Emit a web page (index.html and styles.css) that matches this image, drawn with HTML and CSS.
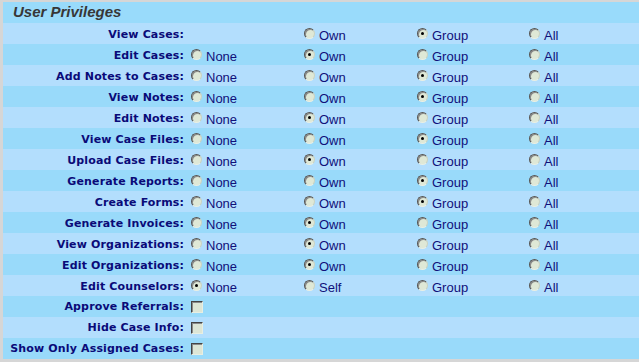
FILE: index.html
```html
<!DOCTYPE html>
<html lang="en">
<head>
  <meta charset="UTF-8" />
  <title>User Privileges</title>
  <link rel="stylesheet" href="styles.css">
</head>
<body>
  <div class="panel">
    <div class="panel-title">User Privileges</div>

    <div class="row light">
      <div class="label">View Cases:</div>
      <div class="opt"></div>
      <div class="opt"><span class="radio"></span>Own</div>
      <div class="opt"><span class="radio on"></span>Group</div>
      <div class="opt"><span class="radio"></span>All</div>
    </div>
    <div class="row dark">
      <div class="label">Edit Cases:</div>
      <div class="opt"><span class="radio"></span>None</div>
      <div class="opt"><span class="radio on"></span>Own</div>
      <div class="opt"><span class="radio"></span>Group</div>
      <div class="opt"><span class="radio"></span>All</div>
    </div>
    <div class="row light">
      <div class="label">Add Notes to Cases:</div>
      <div class="opt"><span class="radio"></span>None</div>
      <div class="opt"><span class="radio"></span>Own</div>
      <div class="opt"><span class="radio on"></span>Group</div>
      <div class="opt"><span class="radio"></span>All</div>
    </div>
    <div class="row dark">
      <div class="label">View Notes:</div>
      <div class="opt"><span class="radio"></span>None</div>
      <div class="opt"><span class="radio"></span>Own</div>
      <div class="opt"><span class="radio on"></span>Group</div>
      <div class="opt"><span class="radio"></span>All</div>
    </div>
    <div class="row light">
      <div class="label">Edit Notes:</div>
      <div class="opt"><span class="radio"></span>None</div>
      <div class="opt"><span class="radio on"></span>Own</div>
      <div class="opt"><span class="radio"></span>Group</div>
      <div class="opt"><span class="radio"></span>All</div>
    </div>
    <div class="row dark">
      <div class="label">View Case Files:</div>
      <div class="opt"><span class="radio"></span>None</div>
      <div class="opt"><span class="radio"></span>Own</div>
      <div class="opt"><span class="radio on"></span>Group</div>
      <div class="opt"><span class="radio"></span>All</div>
    </div>
    <div class="row light">
      <div class="label">Upload Case Files:</div>
      <div class="opt"><span class="radio"></span>None</div>
      <div class="opt"><span class="radio on"></span>Own</div>
      <div class="opt"><span class="radio"></span>Group</div>
      <div class="opt"><span class="radio"></span>All</div>
    </div>
    <div class="row dark">
      <div class="label">Generate Reports:</div>
      <div class="opt"><span class="radio"></span>None</div>
      <div class="opt"><span class="radio"></span>Own</div>
      <div class="opt"><span class="radio on"></span>Group</div>
      <div class="opt"><span class="radio"></span>All</div>
    </div>
    <div class="row light">
      <div class="label">Create Forms:</div>
      <div class="opt"><span class="radio"></span>None</div>
      <div class="opt"><span class="radio"></span>Own</div>
      <div class="opt"><span class="radio on"></span>Group</div>
      <div class="opt"><span class="radio"></span>All</div>
    </div>
    <div class="row dark">
      <div class="label">Generate Invoices:</div>
      <div class="opt"><span class="radio"></span>None</div>
      <div class="opt"><span class="radio on"></span>Own</div>
      <div class="opt"><span class="radio"></span>Group</div>
      <div class="opt"><span class="radio"></span>All</div>
    </div>
    <div class="row light">
      <div class="label">View Organizations:</div>
      <div class="opt"><span class="radio"></span>None</div>
      <div class="opt"><span class="radio on"></span>Own</div>
      <div class="opt"><span class="radio"></span>Group</div>
      <div class="opt"><span class="radio"></span>All</div>
    </div>
    <div class="row dark">
      <div class="label">Edit Organizations:</div>
      <div class="opt"><span class="radio"></span>None</div>
      <div class="opt"><span class="radio on"></span>Own</div>
      <div class="opt"><span class="radio"></span>Group</div>
      <div class="opt"><span class="radio"></span>All</div>
    </div>
    <div class="row light">
      <div class="label">Edit Counselors:</div>
      <div class="opt"><span class="radio on"></span>None</div>
      <div class="opt"><span class="radio"></span>Self</div>
      <div class="opt"><span class="radio"></span>Group</div>
      <div class="opt"><span class="radio"></span>All</div>
    </div>
    <div class="row dark">
      <div class="label">Approve Referrals:</div>
      <div class="opt"><span class="check"></span></div>
    </div>
    <div class="row light">
      <div class="label">Hide Case Info:</div>
      <div class="opt"><span class="check"></span></div>
    </div>
    <div class="row dark">
      <div class="label">Show Only Assigned Cases:</div>
      <div class="opt"><span class="check"></span></div>
    </div>
  </div>
</body>
</html>
```

FILE: styles.css
```css
* {
  box-sizing: border-box;
}

body {
  margin: 0;
  padding: 2px 0 0 3px;
  background-color: #d6d6d6;
  font-family: "Liberation Sans", Arial, sans-serif;
}

.panel {
  background-color: #99dbfb;
}

.panel-title {
  height: 21px;
  padding: 1px 0 0 10px;
  font-size: 15px;
  font-weight: bold;
  font-style: italic;
  color: #373737;
  background-color: #99dbfb;
}

.row {
  display: grid;
  grid-template-columns: 185px 113px 113px 112px 1fr;
  height: 21px;
  align-items: center;
}

.row.light {
  background-color: #b3defd;
}

.row.dark {
  background-color: #99dafa;
}

.label {
  text-align: right;
  padding-right: 4px;
  font-family: "DejaVu Sans", Verdana, sans-serif;
  font-size: 11px;
  font-weight: bold;
  letter-spacing: 0.15px;
  color: #0a0a78;
}

.opt {
  display: flex;
  align-items: center;
  padding-left: 3px;
  font-size: 13px;
  color: #10107a;
  line-height: 21px;
  padding-top: 2px;
}

.radio {
  position: relative;
  width: 11px;
  height: 11px;
  margin: -4px 4px 0 0;
  border-radius: 50%;
  background-color: #dfe8d6;
  border: 1px solid;
  border-color: #555 #c9d2c2 #e9efe4 #555;
  box-shadow: inset 1px 1px 0 #8a8a8a;
}

.radio.on::after {
  content: "";
  position: absolute;
  left: 3px;
  top: 3px;
  width: 3px;
  height: 3px;
  border-radius: 50%;
  background-color: #000;
}

.check {
  width: 12px;
  height: 12px;
  margin-top: -2px;
  background-color: #dde6d6;
  border: 1px solid;
  border-color: #444 #e8eee2 #e8eee2 #444;
  box-shadow: inset 1px 1px 0 #8a8a8a;
}
```
